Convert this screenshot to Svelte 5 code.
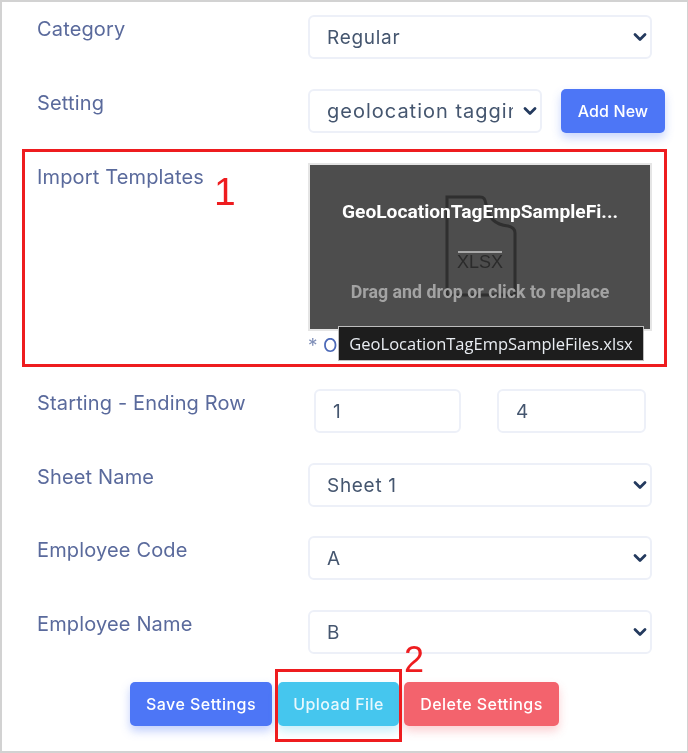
<script>
  const chevron = 'M2 4.5 L7 9.5 L12 4.5';
</script>

{#snippet pick(value, cls = '')}
  <div class="pick {cls}">
    <select aria-label={value}><option>{value}</option></select>
    <svg class="chev" viewBox="0 0 14 14" width="14" height="14"><path d={chevron} /></svg>
  </div>
{/snippet}

<main class="page">
  <div class="row r-cat">
    <span class="label">Category</span>
    {@render pick('Regular')}
  </div>

  <div class="row r-set">
    <span class="label">Setting</span>
    <div class="pair">
      {@render pick('geolocation tagging settings', 'short')}
      <button class="btn add">Add New</button>
    </div>
  </div>

  <section class="annot">
    <span class="label">Import Templates</span>
    <div class="dropcol">
      <div class="drop">
        <svg class="file" viewBox="0 0 74 104" width="74" height="104">
          <path d="M3 2 H36 C40 2 41 4 42 9 C44 24 52 30 64 31 C69 32 71 34 71 38 V100 H3 Z" />
          <line x1="14" y1="57" x2="58" y2="57" />
        </svg>
        <span class="ext">XLSX</span>
        <strong class="fname">GeoLocationTagEmpSampleFi...</strong>
        <span class="hint">Drag and drop or click to replace</span>
      </div>
      <p class="note"><span class="star">*</span> O</p>
      <div class="tip">GeoLocationTagEmpSampleFiles.xlsx</div>
    </div>
    <span class="num n1">1</span>
  </section>

  <div class="row r-range">
    <span class="label">Starting - Ending Row</span>
    <div class="inputs">
      <input value="1" aria-label="Starting row" />
      <input value="4" aria-label="Ending row" />
    </div>
  </div>

  <div class="row r-sheet">
    <span class="label">Sheet Name</span>
    {@render pick('Sheet 1')}
  </div>

  <div class="row r-code">
    <span class="label">Employee Code</span>
    {@render pick('A')}
  </div>

  <div class="row r-name">
    <span class="label">Employee Name</span>
    {@render pick('B')}
  </div>

  <div class="actions">
    <button class="btn save">Save Settings</button>
    <button class="btn upload">Upload File</button>
    <button class="btn del">Delete Settings</button>
    <span class="mark"></span>
    <span class="num n2">2</span>
  </div>
</main>

<style>
  :global(body) { margin: 0; background: #fff; }
  .page {
    box-sizing: border-box;
    width: 688px;
    height: 753px;
    border: 2px solid #d2d2d2;
    border-right-width: 1px;
    padding: 13px 0 0 35px;
    font-family: Inter, "Open Sans", sans-serif;
    position: relative;
    overflow: hidden;
    background: #fff;
    filter: blur(0.35px);
  }
  .row { display: flex; align-items: flex-start; }
  .label {
    width: 271px;
    flex: none;
    font-size: 20px;
    line-height: 29px;
    color: #5a6a9c;
    letter-spacing: 0.15px;
    font-family: Inter, "Open Sans", sans-serif;
    white-space: nowrap;
  }
  .r-set { margin-top: 30px; }
  .r-range { margin-top: 22px; }
  .r-sheet { margin-top: 30px; }
  .r-code { margin-top: 29px; }
  .r-name { margin-top: 30px; }

  .pick { position: relative; width: 344px; height: 44px; flex: none; }
  .pick.short { width: 234px; }
  select, input {
    box-sizing: border-box;
    width: 100%;
    height: 100%;
    border: 2px solid #edf0f8;
    border-radius: 6px;
    background: #fff;
    font: 400 19px Inter, "Open Sans", sans-serif;
    letter-spacing: 0.7px;
    color: #45566f;
    outline: none;
  }
  select {
    appearance: none;
    padding: 0 27px 0 17px;
  }
  .short select { font-size: 20px; letter-spacing: 1px; }
  .chev {
    position: absolute;
    right: 5px;
    top: 15px;
    pointer-events: none;
  }
  .chev path { fill: none; stroke: #243a5e; stroke-width: 2.8; stroke-linecap: round; stroke-linejoin: round; }

  .pair { display: flex; gap: 19px; align-items: flex-start; width: 357px; flex: none; }

  .btn {
    height: 44px;
    border: 0;
    border-radius: 5px;
    color: #fff;
    font: 500 16px Inter, "Open Sans", sans-serif;
    letter-spacing: 0.45px;
    padding: 0;
    flex: none;
  }
  .add { width: 104px; background: #4d76f6; box-shadow: 0 5px 10px rgba(77,118,246,.3); letter-spacing: 0.1px; }
  .save { width: 142px; background: #4d76f6; box-shadow: 0 5px 10px rgba(77,118,246,.35); }
  .upload { width: 121px; background: #45c6ee; box-shadow: 0 5px 10px rgba(69,198,238,.3); color: #e8f8fd; }
  .del { width: 155px; background: #f3636d; box-shadow: 0 5px 10px rgba(243,99,109,.3); }

  .annot {
    box-sizing: border-box;
    display: flex;
    align-items: flex-start;
    position: relative;
    width: 645px;
    height: 218px;
    margin: 16px 0 0 -15px;
    padding: 11px 0 0 12px;
    border: 3px solid #ee1c1f;
  }
  .dropcol { position: relative; width: 344px; flex: none; }
  .drop {
    box-sizing: border-box;
    height: 168px;
    border: 2px solid #e5e5e5;
    background: #4d4d4d;
    position: relative;
    overflow: hidden;
    font-family: Roboto, Inter, sans-serif;
    text-align: center;
  }
  .file { position: absolute; left: 134px; top: 30px; }
  .file path { fill: none; stroke: #2f2f2f; stroke-width: 3; }
  .file line { stroke: #a8a8a8; stroke-width: 2; }
  .ext {
    position: absolute; left: 0; right: 0; top: 87px;
    font: 400 18px "Liberation Sans", Arial, sans-serif; color: #2b2b2b;
  }
  .fname {
    position: absolute; left: 0; right: 0; top: 35px;
    font-size: 19.2px; line-height: 24px; font-weight: 700; color: #fff;
  }
  .hint {
    position: absolute; left: 0; right: 0; top: 116px;
    font-size: 17.8px; line-height: 22px; font-weight: 700; color: #a3a3a3;
  }
  .note {
    margin: 0; padding-top: 3px;
    font: 400 19px/24px Inter, sans-serif;
    color: #4d6ab8;
  }
  .star { color: #7f8fb8; }
  .tip {
    position: absolute;
    left: 30px;
    top: 163px;
    box-sizing: border-box;
    width: 306px;
    height: 35px;
    background: #1d1d1d;
    border: 1px solid #bdbdbd;
    color: #e9edf2;
    font: 400 16.5px/33px "Open Sans", sans-serif;
    text-align: center;
    white-space: nowrap;
  }

  .inputs { display: flex; gap: 36px; margin-left: 6px; }
  input { width: 147px; height: 44px; padding: 0 17px; flex: none; }
  input + input { width: 149px; }

  .actions {
    position: absolute;
    left: 128px;
    top: 680px;
    display: flex;
    gap: 6px;
  }
  .upload { margin-right: -1px; }
  .mark {
    position: absolute;
    left: 145px;
    top: -13px;
    width: 127px;
    height: 73px;
    box-sizing: border-box;
    border: 3px solid #ee1c1f;
    pointer-events: none;
  }
  .num {
    position: absolute;
    font: 400 39px/40px "Liberation Sans", Arial, sans-serif;
    color: #ee1c1f;
  }
  .n1 { left: 189px; top: 20px; }
  .n2 { left: 274px; top: -42px; font-size: 36px; }
</style>
